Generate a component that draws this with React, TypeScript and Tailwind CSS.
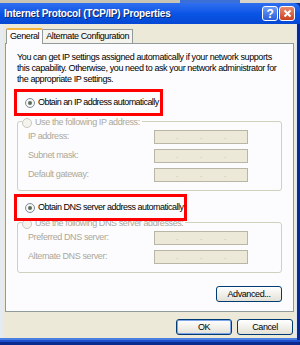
import React from 'react';

const font = { fontFamily: '"Liberation Sans", Arial, sans-serif' };

function Radio({ checked, disabled }: { checked?: boolean; disabled?: boolean }) {
  return (
    <svg width="10" height="10" viewBox="0 0 10 10" className="shrink-0">
      <circle cx="5" cy="5" r="4.5" fill={disabled ? '#f4f3ee' : '#f6f6f3'} stroke={disabled ? '#c9c7ba' : '#7d8b9f'} />
      {checked && <circle cx="5" cy="5" r="2" fill="#5f6b5f" />}
    </svg>
  );
}

function IpBox() {
  return (
    <div className="w-[94px] h-[14px] border border-[#b9b6a6] bg-[#ece9d8] flex items-center justify-around px-[10px] text-[8px] leading-none text-[#b8b5a6]">
      <span>.</span><span>.</span><span>.</span>
    </div>
  );
}

function Field({ label }: { label: string }) {
  return (
    <div className="flex items-center justify-between pl-[10px] pr-[33px] h-[14px]">
      <span className="text-[#aca899]">{label}</span>
      <IpBox />
    </div>
  );
}

function XpButton({ label, def, w }: { label: string; def?: boolean; w: string }) {
  return (
    <button className={`${w} h-[16px] rounded-[3px] border border-[#003c74] bg-gradient-to-b from-[#ffffff] to-[#e3e1d6] text-black leading-none ${def ? 'shadow-[inset_0_0_0_1px_#7fa6e8]' : ''}`}>
      {label}
    </button>
  );
}

export default function App() {
  return (
    <div className="w-[300px] h-[345px] overflow-hidden bg-[#0a2a8e] text-[9px] tracking-[-0.4px] text-black whitespace-nowrap" style={font}>
      <div className="flex h-[3px]">
        <div className="w-[180px] bg-[#c9c6b6]" />
        <div className="w-[60px] bg-[#3a6fd8]" />
        <div className="flex-1 bg-[#d9d6c9]" />
      </div>
      <div className="h-[21px] flex items-center justify-between pl-[4px] pr-[5px] bg-gradient-to-b from-[#2f6ff0] via-[#0a55e6] to-[#0548d3] rounded-tr-[6px]">
        <span className="text-white font-bold text-[10px] tracking-[-0.2px] [text-shadow:1px_1px_0_#0a246a]">Internet Protocol (TCP/IP) Properties</span>
        <div className="flex gap-[1px]">
          <div className="w-[16px] h-[15px] rounded-[3px] border border-white bg-gradient-to-b from-[#6d9cf5] to-[#2a5ed8] flex items-center justify-center text-white font-bold text-[12px] leading-none">?</div>
          <div className="w-[16px] h-[15px] rounded-[3px] border border-white bg-gradient-to-b from-[#e98a6c] to-[#c7401f] flex items-center justify-center">
            <svg width="9" height="9" viewBox="0 0 9 9"><path d="M1.5 1.5 L7.5 7.5 M7.5 1.5 L1.5 7.5" stroke="white" strokeWidth="2" /></svg>
          </div>
        </div>
      </div>
      <div className="h-[314px] mr-[3px] bg-[#ece9d8] border-l-[3px] border-l-[#e6ebf1] border-r-[1px] border-r-[#d8e4f8] flex flex-col pl-[2px] pr-[2px]">
        <div className="flex items-end h-[19px] pl-[1px] pt-[3px]">
          <div className="h-[16px] px-[3px] bg-[#fcfcfe] border border-b-0 border-[#919b9c] border-t-[2px] border-t-[#f4b53a] rounded-t-[2px] flex items-center relative top-[1px] z-10">General</div>
          <div className="h-[14px] px-[3px] bg-[#f4f3ee] border border-b-0 border-l-0 border-[#919b9c] flex items-center">Alternate Configuration</div>
        </div>
        <div className="h-[269px] bg-[#fcfcfe] border border-[#919b9c] flex flex-col pt-[8px] px-[10px]">
          <p className="leading-[11px] pl-[1px] pr-[4px] whitespace-normal">You can get IP settings assigned automatically if your network supports this capability. Otherwise, you need to ask your network administrator for the appropriate IP settings.</p>
          <div className="mt-[4px] -ml-[2px] w-[149px] h-[27px] border-[3px] border-[#ff0000] flex items-center gap-[3px] pl-[8px] tracking-[-0.55px]">
            <Radio checked /><span>Obtain an IP address automatically</span>
          </div>
          <div className="relative mt-[5px] border border-[#d0d0bf] rounded-[3px] h-[70px] ml-[1px] mr-[1px] pt-[8px] flex flex-col gap-[5px]">
            <div className="absolute -top-[6px] left-[4px] bg-[#fcfcfe] pr-[2px] flex items-center gap-[3px] text-[#aca899]"><Radio disabled /><span>Use the following IP address:</span></div>
            <Field label="IP address:" />
            <Field label="Subnet mask:" />
            <Field label="Default gateway:" />
          </div>
          <div className="mt-[3px] -ml-[2px] w-[173px] h-[27px] border-[3px] border-[#ff0000] flex items-center gap-[3px] pl-[8px] relative z-10 tracking-[-0.5px]">
            <Radio checked /><span>Obtain DNS server address automatically</span>
          </div>
          <div className="relative mt-[1px] border border-[#d0d0bf] rounded-[3px] h-[51px] ml-[1px] mr-[1px] pt-[8px] flex flex-col gap-[5px]">
            <div className="absolute -top-[6px] left-[4px] bg-[#fcfcfe] pr-[2px] flex items-center gap-[3px] text-[#aca899]"><Radio disabled /><span>Use the following DNS server addresses:</span></div>
            <Field label="Preferred DNS server:" />
            <Field label="Alternate DNS server:" />
          </div>
          <div className="flex justify-end mt-[13px] pr-[1px]">
            <XpButton label="Advanced..." w="w-[66px]" />
          </div>
        </div>
        <div className="flex justify-end gap-[5px] mt-[7px] pr-[1px]">
          <XpButton label="OK" def w="w-[56px]" />
          <XpButton label="Cancel" w="w-[56px]" />
        </div>
      </div>
      <div className="h-[2px] mr-[3px] bg-[#4a7fe0]" />
      <div className="h-[2px] bg-[#1c4fd0]" />
    </div>
  );
}
